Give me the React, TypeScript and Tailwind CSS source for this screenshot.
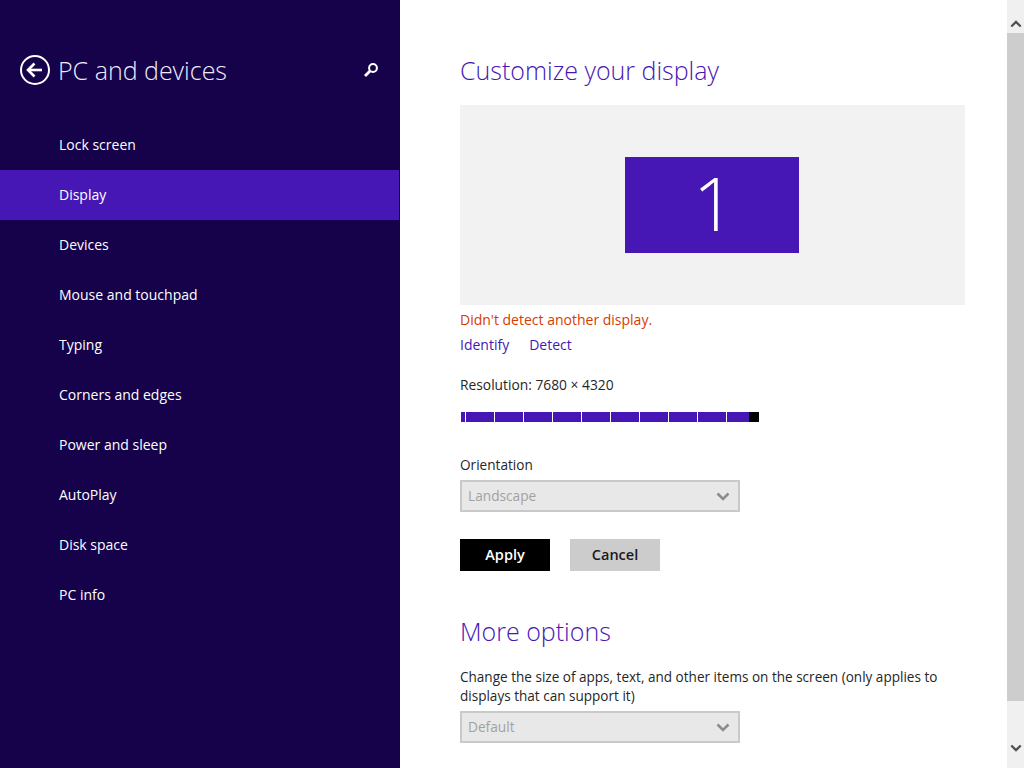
const navItems = [
  "Lock screen",
  "Display",
  "Devices",
  "Mouse and touchpad",
  "Typing",
  "Corners and edges",
  "Power and sleep",
  "AutoPlay",
  "Disk space",
  "PC info",
];

const segments = [28, 28, 28, 28, 28, 28, 28, 28, 28, 22];

function Chevron({ className, up }: { className: string; up?: boolean }) {
  return (
    <svg viewBox="0 0 14 9" className={className} fill="none" stroke="currentColor" strokeWidth="2.6">
      <path d={up ? "M1.5 7.5 7 2l5.5 5.5" : "M1.5 1.5 7 7l5.5-5.5"} />
    </svg>
  );
}

function Select({ label }: { label: string }) {
  return (
    <div className="w-[280px] h-[32px] flex items-center justify-between border-2 border-[#c9c9c9] bg-[#e8e8e8] pl-[6px] pr-[8px] text-[13.7px] text-[#a2a2a2]">
      <span>{label}</span>
      <Chevron className="w-[14px] h-[9px] text-[#8c8c8c]" />
    </div>
  );
}

export default function App() {
  return (
    <div className="w-[1024px] h-[768px] overflow-hidden flex bg-white text-[14px] leading-[20px] text-[#262626] font-['Open_Sans',sans-serif]">
      {/* Left nav */}
      <aside className="w-[400px] shrink-0 bg-[#15024a] pr-px text-white">
        <div className="h-[120px] pt-[55px] pl-[20px] pr-[20px] flex items-start">
          <svg viewBox="0 0 30 30" className="w-[30px] h-[30px] shrink-0" fill="none" stroke="white">
            <circle cx="15" cy="15" r="14" strokeWidth="2" />
            <path d="M8 15h14" strokeWidth="2.6" />
            <path d="M14.5 8.5 8 15l6.5 6.5" strokeWidth="2.6" />
          </svg>
          <h1 className="ml-[8px] text-[25px] leading-[30px] font-light text-[#efeaf8] whitespace-nowrap">PC and devices</h1>
          <svg viewBox="0 0 16 16" className="ml-auto mt-[7px] w-[16px] h-[16px]" fill="none" stroke="white">
            <circle cx="10" cy="6" r="3.9" strokeWidth="2" />
            <path d="M7 9 2 14" strokeWidth="2.8" />
          </svg>
        </div>
        <nav>
          {navItems.map((item) => (
            <div
              key={item}
              className={`h-[50px] pl-[59px] pb-[1px] flex items-center ${item === "Display" ? "bg-[#4617b4]" : ""}`}
            >
              {item}
            </div>
          ))}
        </nav>
      </aside>

      {/* Content */}
      <main className="flex-1 pl-[60px] pt-[54px]">
        <h2 className="text-[25px] leading-[32px] font-light text-[#4617b4]">Customize your display</h2>
        <div className="mt-[19px] w-[505px] h-[200px] bg-[#f2f2f2] pr-[2px] flex items-center justify-center">
          <div className="w-[174px] h-[96px] bg-[#4617b4] flex items-center justify-center pb-[4px] pl-[5px] text-white text-[74px] font-light leading-none">
            1
          </div>
        </div>
        <p className="mt-[5px] text-[#d83b01]">Didn't detect another display.</p>
        <div className="mt-[5px] flex gap-[20px] text-[#4617b4]">
          <span>Identify</span>
          <span>Detect</span>
        </div>
        <p className="mt-[20px] text-[13.8px]">Resolution: 7680 × 4320</p>
        <div className="mt-[17px] ml-px h-[10px] flex">
          <div className="w-[4px] bg-[#4617b4] mr-px" />
          {segments.map((width, i) => (
            <div
              key={i}
              className={`bg-[#4617b4] ${i < segments.length - 1 ? "mr-px" : ""} ${width === 28 ? "w-[28px]" : "w-[22px]"}`}
            />
          ))}
          <div className="w-[10px] bg-black" />
        </div>
        <p className="mt-[33px] mb-[5px] text-[13.6px]">Orientation</p>
        <Select label="Landscape" />
        <div className="mt-[27px] flex gap-[20px] font-semibold text-[14.5px]">
          <button className="w-[90px] h-[32px] bg-black text-white">Apply</button>
          <button className="w-[90px] h-[32px] bg-[#cccccc] text-[#1a1a1a]">Cancel</button>
        </div>
        <h2 className="mt-[44px] text-[25px] leading-[32px] font-light text-[#4617b4]">More options</h2>
        <p className="mt-[21px] w-[505px] text-[13.55px] leading-[19px]">
          Change the size of apps, text, and other items on the screen (only applies to displays that can support it)
        </p>
        <div className="mt-[5px]">
          <Select label="Default" />
        </div>
      </main>

      {/* Scrollbar */}
      <div className="w-[17px] shrink-0 bg-[#f0f0f0] flex flex-col items-center text-[#505050]">
        <div className="h-[33px] w-full flex items-end justify-center pb-[5px]">
          <Chevron up className="w-[12px] h-[8px]" />
        </div>
        <div className="w-full h-[668px] bg-[#cdcdcd]" />
        <div className="flex-1 w-full flex items-end justify-center pb-[16px]">
          <Chevron className="w-[12px] h-[8px]" />
        </div>
      </div>
    </div>
  );
}
